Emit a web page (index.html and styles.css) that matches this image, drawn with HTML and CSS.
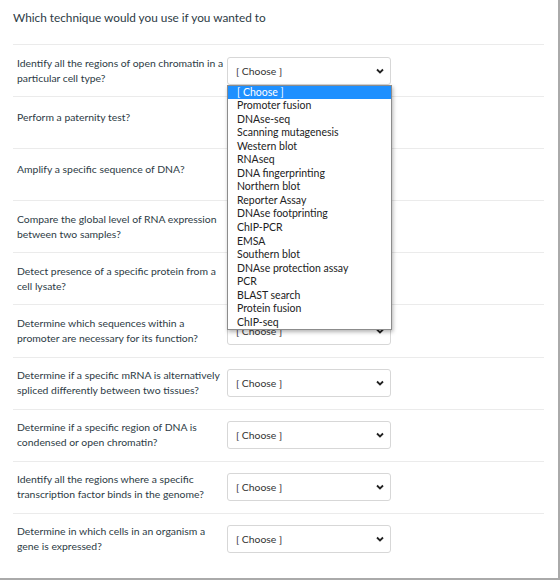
FILE: index.html
```html
<!DOCTYPE html>
<html>
<head>
<meta charset="utf-8">
<link rel="stylesheet" href="styles.css">
</head>
<body>
<div class="page">
  <div class="title">Which technique would you use if you wanted to</div>
  <div class="rows">
    <div class="row">
      <div class="q">Identify all the regions of open chromatin in a particular cell type?</div>
      <div class="sel-wrap">
        <div class="sel"><span>[ Choose ]</span><svg class="chev" viewBox="0 0 8 6" width="8" height="6"><path d="M1 1.5 L4 4.5 L7 1.5" fill="none" stroke="#222" stroke-width="1.8"/></svg></div>
        <ul class="popup">
          <li class="hl">[ Choose ]</li>
          <li>Promoter fusion</li>
          <li>DNAse-seq</li>
          <li>Scanning mutagenesis</li>
          <li>Western blot</li>
          <li>RNAseq</li>
          <li>DNA fingerprinting</li>
          <li>Northern blot</li>
          <li>Reporter Assay</li>
          <li>DNAse footprinting</li>
          <li>ChIP-PCR</li>
          <li>EMSA</li>
          <li>Southern blot</li>
          <li>DNAse protection assay</li>
          <li>PCR</li>
          <li>BLAST search</li>
          <li>Protein fusion</li>
          <li>ChIP-seq</li>
        </ul>
      </div>
    </div>
    <div class="row">
      <div class="q">Perform a paternity test?</div>
      <div class="sel-wrap"><div class="sel"><span>[ Choose ]</span><svg class="chev" viewBox="0 0 8 6" width="8" height="6"><path d="M1 1.5 L4 4.5 L7 1.5" fill="none" stroke="#222" stroke-width="1.8"/></svg></div></div>
    </div>
    <div class="row">
      <div class="q">Amplify a specific sequence of DNA?</div>
      <div class="sel-wrap"><div class="sel"><span>[ Choose ]</span><svg class="chev" viewBox="0 0 8 6" width="8" height="6"><path d="M1 1.5 L4 4.5 L7 1.5" fill="none" stroke="#222" stroke-width="1.8"/></svg></div></div>
    </div>
    <div class="row">
      <div class="q">Compare the global level of RNA expression between two samples?</div>
      <div class="sel-wrap"><div class="sel"><span>[ Choose ]</span><svg class="chev" viewBox="0 0 8 6" width="8" height="6"><path d="M1 1.5 L4 4.5 L7 1.5" fill="none" stroke="#222" stroke-width="1.8"/></svg></div></div>
    </div>
    <div class="row">
      <div class="q">Detect presence of a specific protein from a cell lysate?</div>
      <div class="sel-wrap"><div class="sel"><span>[ Choose ]</span><svg class="chev" viewBox="0 0 8 6" width="8" height="6"><path d="M1 1.5 L4 4.5 L7 1.5" fill="none" stroke="#222" stroke-width="1.8"/></svg></div></div>
    </div>
    <div class="row">
      <div class="q">Determine which sequences within a promoter are necessary for its function?</div>
      <div class="sel-wrap"><div class="sel"><span>[ Choose ]</span><svg class="chev" viewBox="0 0 8 6" width="8" height="6"><path d="M1 1.5 L4 4.5 L7 1.5" fill="none" stroke="#222" stroke-width="1.8"/></svg></div></div>
    </div>
    <div class="row">
      <div class="q">Determine if a specific mRNA is alternatively spliced differently between two tissues?</div>
      <div class="sel-wrap"><div class="sel"><span>[ Choose ]</span><svg class="chev" viewBox="0 0 8 6" width="8" height="6"><path d="M1 1.5 L4 4.5 L7 1.5" fill="none" stroke="#222" stroke-width="1.8"/></svg></div></div>
    </div>
    <div class="row">
      <div class="q">Determine if a specific region of DNA is condensed or open chromatin?</div>
      <div class="sel-wrap"><div class="sel"><span>[ Choose ]</span><svg class="chev" viewBox="0 0 8 6" width="8" height="6"><path d="M1 1.5 L4 4.5 L7 1.5" fill="none" stroke="#222" stroke-width="1.8"/></svg></div></div>
    </div>
    <div class="row">
      <div class="q">Identify all the regions where a specific transcription factor binds in the genome?</div>
      <div class="sel-wrap"><div class="sel"><span>[ Choose ]</span><svg class="chev" viewBox="0 0 8 6" width="8" height="6"><path d="M1 1.5 L4 4.5 L7 1.5" fill="none" stroke="#222" stroke-width="1.8"/></svg></div></div>
    </div>
    <div class="row">
      <div class="q">Determine in which cells in an organism a gene is expressed?</div>
      <div class="sel-wrap"><div class="sel"><span>[ Choose ]</span><svg class="chev" viewBox="0 0 8 6" width="8" height="6"><path d="M1 1.5 L4 4.5 L7 1.5" fill="none" stroke="#222" stroke-width="1.8"/></svg></div></div>
    </div>
  </div>
</div>
</body>
</html>
```

FILE: styles.css
```css
html, body {
  margin: 0;
  padding: 0;
  background: #fff;
}
body {
  font-family: Lato, "Noto Sans", sans-serif;
  color: #2d3b45;
}
.page {
  width: 558px;
  height: 578px;
  border-right: 2px solid #aaaaaa;
  border-bottom: 2px solid #aaaaaa;
  box-sizing: content-box;
}
.title {
  font-size: 11.8px;
  line-height: 16px;
  padding: 10px 0 0 13px;
  height: 44px;
  box-sizing: border-box;
}
.rows {
  margin: 0 14px 0 13px;
}
.row {
  display: flex;
  align-items: center;
  height: 52.1px;
  box-sizing: border-box;
  border-top: 1px solid #ebebeb;
  padding: 0 0 0 4px;
}
.q {
  width: 210px;
  padding-right: 3px;
  font-size: 10.4px;
  line-height: 15px;
  min-height: 26px;
  box-sizing: border-box;
}
.sel-wrap {
  position: relative;
}
.sel {
  width: 164px;
  height: 28px;
  box-sizing: border-box;
  border: 1px solid #d7d7d7;
  border-radius: 3px;
  display: flex;
  align-items: center;
  justify-content: space-between;
  padding: 0 6px 0 8px;
  font-size: 10.4px;
  color: #333;
  background: #fff;
}
.chev {
  display: block;
}
.popup {
  position: absolute;
  top: 28px;
  left: 0;
  width: 165px;
  margin: 0;
  padding: 0;
  list-style: none;
  background: #fff;
  border: 1px solid #8c8c8c;
  box-sizing: border-box;
  box-shadow: 1px 2px 4px rgba(0, 0, 0, 0.3);
  z-index: 5;
  font-size: 10.5px;
  color: #222;
}
.popup li {
  height: 13.55px;
  line-height: 13.55px;
  padding-left: 9px;
  white-space: nowrap;
}
.popup li.hl {
  background: #1e90ff;
  color: #fff;
}
```
